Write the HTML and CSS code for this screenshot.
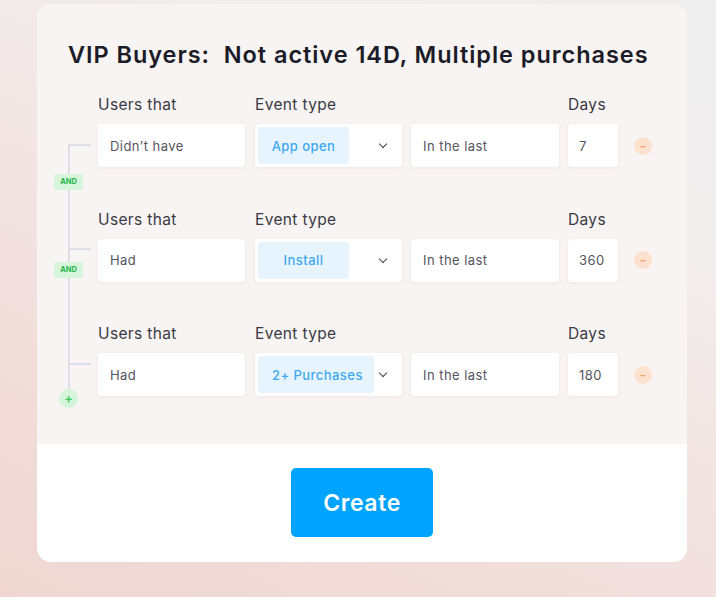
FILE: index.html
```html
<!DOCTYPE html>
<html lang="en">
<head>
    <meta charset="UTF-8">
    <title>Segment builder</title>
    <link rel="stylesheet" href="styles.css">
</head>
<body>
    <div class="card">
        <div class="card-top">
            <h1>VIP Buyers:&nbsp; Not active 14D, Multiple purchases</h1>

            <div class="rules">
                <!-- Connector tree -->
                <div class="tree-line"></div>
                <div class="stub stub-1"></div>
                <div class="stub stub-2"></div>
                <div class="stub stub-3"></div>
                <span class="and and-1">AND</span>
                <span class="and and-2">AND</span>
                <span class="add">+</span>

                <!-- Rule 1 -->
                <div class="rule">
                    <span class="label">Users that</span>
                    <span class="label">Event type</span>
                    <span class="label"></span>
                    <span class="label">Days</span>
                    <span></span>
                    <div class="field">Didn’t have</div>
                    <div class="field event">
                        <span class="chip">App open</span>
                        <span class="chevron"></span>
                    </div>
                    <div class="field">In the last</div>
                    <div class="field days">7</div>
                    <span class="remove">–</span>
                </div>

                <!-- Rule 2 -->
                <div class="rule">
                    <span class="label">Users that</span>
                    <span class="label">Event type</span>
                    <span class="label"></span>
                    <span class="label">Days</span>
                    <span></span>
                    <div class="field">Had</div>
                    <div class="field event">
                        <span class="chip">Install</span>
                        <span class="chevron"></span>
                    </div>
                    <div class="field">In the last</div>
                    <div class="field days">360</div>
                    <span class="remove">–</span>
                </div>

                <!-- Rule 3 -->
                <div class="rule">
                    <span class="label">Users that</span>
                    <span class="label">Event type</span>
                    <span class="label"></span>
                    <span class="label">Days</span>
                    <span></span>
                    <div class="field">Had</div>
                    <div class="field event">
                        <span class="chip wide">2+ Purchases</span>
                        <span class="chevron"></span>
                    </div>
                    <div class="field">In the last</div>
                    <div class="field days">180</div>
                    <span class="remove">–</span>
                </div>
            </div>
        </div>

        <div class="card-bottom">
            <button class="create">Create</button>
        </div>
    </div>
</body>
</html>
```

FILE: styles.css
```css
body {
    font-family: Inter, "Open Sans", sans-serif;
    margin: 0;
    height: 597px;
    overflow: hidden;
    background: linear-gradient(25deg, #efd6d1 0%, #f2e3e1 45%, #f1eeee 75%, #eeeeef 100%);
}
.card {
    width: 650px;
    height: 558px;
    margin: 4px 0 0 37px;
    border-radius: 14px;
    overflow: hidden;
    background-color: #ffffff;
    display: flex;
    flex-direction: column;
}
.card-top {
    height: 440px;
    background-color: #f8f4f3;
    padding-top: 36px;
    box-sizing: border-box;
}
.card-top h1 {
    margin: 0 0 26px 31px;
    font-size: 23.5px;
    line-height: 29px;
    font-weight: 600;
    color: #1c1c28;
    letter-spacing: 0.95px;
}
.rules {
    position: relative;
    padding-left: 61px;
}
.rule {
    display: grid;
    grid-template-columns: 147px 148px 148px 50px 18px;
    grid-template-rows: 20px 43px;
    column-gap: 9px;
    row-gap: 9px;
    align-items: center;
    margin-bottom: 42.5px;
}
.rule > :nth-child(2),
.rule > :nth-child(7) {
    margin-left: 1px;
}
.label {
    font-size: 15.5px;
    color: #3a3a44;
    line-height: 20px;
    letter-spacing: 0.35px;
}
.field {
    height: 43px;
    display: flex;
    align-items: center;
    padding-left: 12px;
    background-color: #ffffff;
    border-radius: 4px;
    box-shadow: 0 1px 4px rgba(60, 30, 30, 0.06);
    font-size: 13px;
    letter-spacing: 0.45px;
    color: #55555f;
    box-sizing: border-box;
}
.field.days {
    padding-left: 11px;
}
.field.event {
    padding: 3px;
    justify-content: space-between;
}
.chip {
    min-width: 91px;
    height: 100%;
    padding: 0 11px;
    box-sizing: border-box;
    display: flex;
    align-items: center;
    justify-content: center;
    background-color: #e7f4fd;
    border-radius: 3px;
    color: #3ca9f0;
    font-size: 13px;
    font-weight: 500;
}
.chip.wide {
    padding: 0 11px 0 14px;
}
.chevron {
    width: 5px;
    height: 5px;
    margin-right: 13px;
    margin-top: -3px;
    border-right: 1.6px solid #444;
    border-bottom: 1.6px solid #444;
    transform: rotate(45deg);
}
.remove {
    width: 18px;
    height: 18px;
    margin-left: 7px;
    border-radius: 50%;
    background-color: #fde1cf;
    color: #f3a56f;
    font-size: 11px;
    font-weight: 700;
    line-height: 18px;
    text-align: center;
}

/* connector tree */
.tree-line {
    position: absolute;
    left: 31px;
    top: 49px;
    width: 1.5px;
    height: 246px;
    background-color: #dcdfe9;
}
.stub {
    position: absolute;
    left: 31px;
    width: 23px;
    height: 1.5px;
    background-color: #dcdfe9;
}
.stub-1 { top: 49px; }
.stub-2 { top: 153px; }
.stub-3 { top: 268px; }
.and {
    position: absolute;
    left: 17px;
    width: 29px;
    height: 16px;
    border-radius: 2px;
    background-color: #d6f6dc;
    color: #27b34a;
    font-size: 7.5px;
    font-weight: 700;
    line-height: 16px;
    text-align: center;
}
.and-1 { top: 79px; }
.and-2 { top: 167px; }
.add {
    position: absolute;
    left: 22px;
    top: 294px;
    width: 19px;
    height: 19px;
    border-radius: 50%;
    background-color: #d5f5da;
    color: #3cc45f;
    font-size: 13px;
    font-weight: 600;
    line-height: 19px;
    text-align: center;
}

.card-bottom {
    flex: 1;
    display: flex;
    justify-content: center;
    padding-top: 24px;
}
.create {
    width: 142px;
    height: 69px;
    border: none;
    border-radius: 5px;
    background-color: #00a3fd;
    color: white;
    font-family: Inter, "Open Sans", sans-serif;
    font-size: 23px;
    font-weight: 600;
    letter-spacing: 0.6px;
    cursor: pointer;
}
```
